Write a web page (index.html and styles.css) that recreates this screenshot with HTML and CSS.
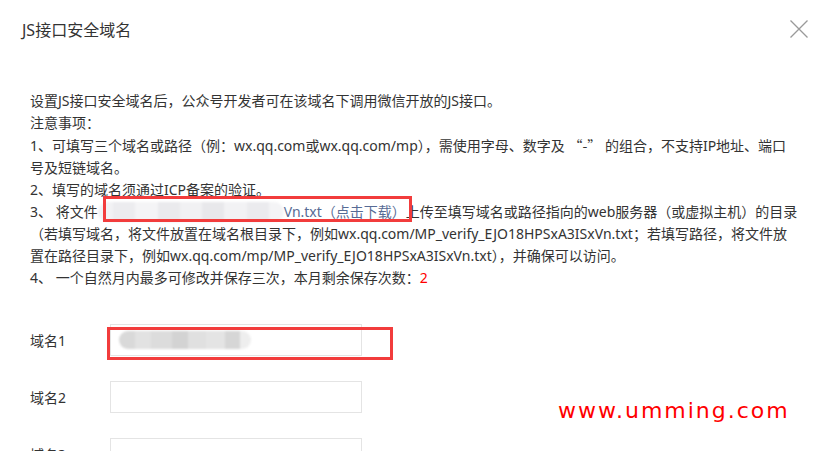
FILE: index.html
```html
<!DOCTYPE html>
<html lang="zh-CN">
<head>
    <meta charset="UTF-8">
    <title>JS接口安全域名</title>
    <link rel="stylesheet" href="styles.css">
</head>
<body>
    <div class="dialog">
        <div class="dialog-head">
            <h3>JS接口安全域名</h3>
            <svg class="close" width="18" height="18" viewBox="0 0 18 18">
                <path d="M0.5 0.5 L17.5 17.5 M17.5 0.5 L0.5 17.5" stroke="#9a9a9a" stroke-width="1.3" fill="none"/>
            </svg>
        </div>

        <div class="tips">
            <p>设置JS接口安全域名后，公众号开发者可在该域名下调用微信开放的JS接口。</p>
            <p>注意事项：</p>
            <p>1、可填写三个域名或路径（例：wx.qq.com或wx.qq.com/mp），需使用字母、数字及 <span class="cjk">“-”</span> 的组合，不支持IP地址、端口<br>号及短链域名。</p>
            <p>2、填写的域名须通过ICP备案的验证。</p>
            <p>3、 将文件<span class="blur blur-file"></span><a class="link" href="#">Vn.txt（点击下载）</a>上传至填写域名或路径指向的web服务器（或虚拟主机）的目录<br>（若填写域名，将文件放置在域名根目录下，例如wx.qq.com/MP_verify_EJO18HPSxA3ISxVn.txt；若填写路径，将文件放<br>置在路径目录下，例如wx.qq.com/mp/MP_verify_EJO18HPSxA3ISxVn.txt），并确保可以访问。</p>
            <p>4、 一个自然月内最多可修改并保存三次，本月剩余保存次数：<span class="count">2</span></p>
        </div>

        <div class="form">
            <div class="form-row">
                <label>域名1</label>
                <div class="input"><span class="blur blur-input"></span></div>
            </div>
            <div class="form-row">
                <label>域名2</label>
                <div class="input"></div>
            </div>
            <div class="form-row">
                <label>域名3</label>
                <div class="input"></div>
            </div>
        </div>

        <div class="mark mark-file"></div>
        <div class="mark mark-input"></div>
        <div class="watermark">www.umming.com</div>
    </div>
</body>
</html>
```

FILE: styles.css
```css
body {
    margin: 0;
    background: #fff;
    font-family: "Noto Sans", "Noto Sans CJK SC", sans-serif;
    color: #333;
    overflow: hidden;
}

.dialog {
    position: relative;
    height: 451px;
}

.dialog-head {
    display: flex;
    justify-content: space-between;
    align-items: flex-start;
    padding: 20px 8px 0 22px;
}

.dialog-head h3 {
    margin: 0;
    font-size: 16px;
    font-weight: normal;
    line-height: 20px;
    color: #333;
}

.close {
    display: block;
}

.tips {
    padding: 50px 0 0 30px;
    font-size: 14px;
    line-height: 22px;
    white-space: nowrap;
}

.tips p {
    margin: 0;
}

.cjk {
    font-family: "Noto Sans CJK SC", sans-serif;
}

.link {
    color: #576b95;
    text-decoration: none;
}

.count {
    color: #f00;
}

.blur {
    display: inline-block;
    border-radius: 10px;
    filter: blur(1px);
    background: linear-gradient(90deg,
        #f2f2f4 0 8%, #ececef 8% 20%, #f4f4f6 20% 32%, #eaeaed 32% 44%,
        #f1f1f3 44% 56%, #e8e8eb 56% 68%, #f2f2f4 68% 80%, #ebebee 80% 92%, #f4f4f6 92%);
}

.blur-file {
    width: 186px;
    height: 20px;
    vertical-align: -5px;
}

.blur-input {
    width: 132px;
    height: 18px;
    margin: 6px 0 0 8px;
    background: linear-gradient(90deg,
        #d9d9d9 0 12%, #e2e2e2 12% 24%, #dcdcdc 24% 40%, #d3d3d3 40% 52%,
        #e0e0e0 52% 66%, #e4e4e4 66% 80%, #d6d6d6 80% 92%, #eeeeee 92%);
}

.form {
    padding: 35px 0 0 30px;
}

.form-row {
    display: flex;
    align-items: center;
    margin-bottom: 25px;
}

.form-row label {
    width: 80px;
    font-size: 14px;
    color: #333;
}

.input {
    width: 250px;
    height: 30px;
    border: 1px solid #e4e4e4;
}

.mark {
    position: absolute;
    border: 3px solid #f23c3c;
}

.mark-file {
    left: 103px;
    top: 196px;
    width: 303px;
    height: 20px;
}

.mark-input {
    left: 107px;
    top: 327px;
    width: 280px;
    height: 27px;
}

.watermark {
    position: absolute;
    left: 558px;
    top: 398px;
    font-family: "DejaVu Sans", sans-serif;
    font-size: 22px;
    letter-spacing: 2px;
    color: #f00;
}
```
